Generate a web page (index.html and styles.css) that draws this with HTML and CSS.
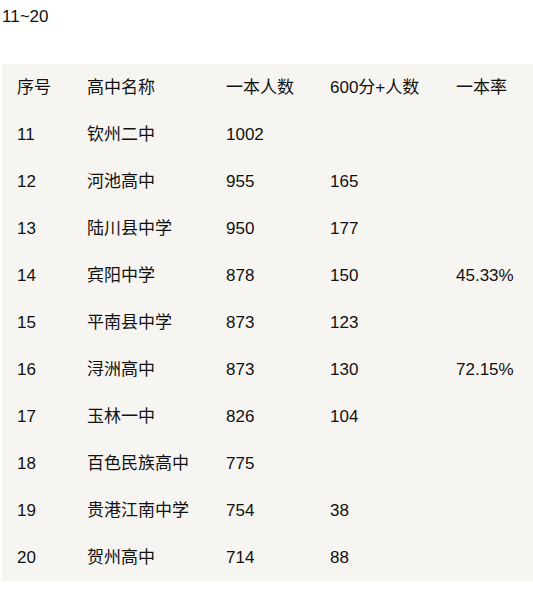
FILE: index.html
```
<!DOCTYPE html>
<html lang="zh">
<head>
<meta charset="utf-8">
<link rel="stylesheet" href="styles.css">
</head>
<body>
<p class="title">11~20</p>
<table class="rank">
<colgroup>
<col class="c1"><col class="c2"><col class="c3"><col class="c4"><col class="c5">
</colgroup>
<thead>
<tr><th>序号</th><th>高中名称</th><th>一本人数</th><th>600分+人数</th><th>一本率</th></tr>
</thead>
<tbody>
<tr><td>11</td><td>钦州二中</td><td>1002</td><td></td><td></td></tr>
<tr><td>12</td><td>河池高中</td><td>955</td><td>165</td><td></td></tr>
<tr><td>13</td><td>陆川县中学</td><td>950</td><td>177</td><td></td></tr>
<tr><td>14</td><td>宾阳中学</td><td>878</td><td>150</td><td>45.33%</td></tr>
<tr><td>15</td><td>平南县中学</td><td>873</td><td>123</td><td></td></tr>
<tr><td>16</td><td>浔洲高中</td><td>873</td><td>130</td><td>72.15%</td></tr>
<tr><td>17</td><td>玉林一中</td><td>826</td><td>104</td><td></td></tr>
<tr><td>18</td><td>百色民族高中</td><td>775</td><td></td><td></td></tr>
<tr><td>19</td><td>贵港江南中学</td><td>754</td><td>38</td><td></td></tr>
<tr><td>20</td><td>贺州高中</td><td>714</td><td>88</td><td></td></tr>
</tbody>
</table>
</body>
</html>
```
FILE: styles.css
```
html, body {
  margin: 0;
  padding: 0;
  background: #fff;
}
body {
  padding: 0 0 0 2px;
  font-family: "Liberation Sans", Arial, "Noto Sans CJK SC", sans-serif;
  font-size: 17px;
  color: #111;
}
.title {
  margin: 0;
  height: 64px;
  line-height: 34px;
}
.rank {
  border-collapse: collapse;
  table-layout: fixed;
  width: 531px;
  background: #f7f5f2;
}
.c1 { width: 70px; }
.c2 { width: 139px; }
.c3 { width: 104px; }
.c4 { width: 126px; }
.c5 { width: 92px; }
.rank th, .rank td {
  height: 47px;
  padding: 0 0 0 15px;
  box-sizing: border-box;
  line-height: 20px;
  text-align: left;
  font-weight: normal;
  white-space: nowrap;
  vertical-align: middle;
}
```
